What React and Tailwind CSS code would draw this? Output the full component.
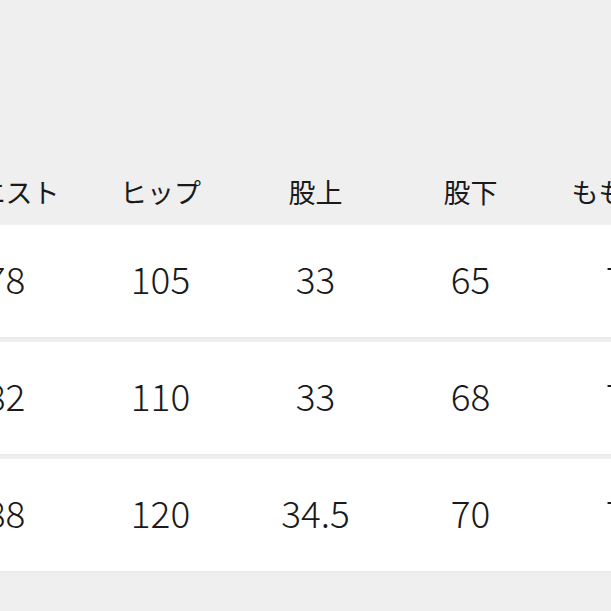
const headers = ["ウエスト", "ヒップ", "股上", "股下", "もも周り"]

const rows = [
  ["78", "105", "33", "65", "72"],
  ["82", "110", "33", "68", "74"],
  ["88", "120", "34.5", "70", "77"],
]

export default function App() {
  return (
    <div className="w-[611px] h-[611px] overflow-hidden bg-[#efefef] text-[#1a1a1a]" style={{ fontFamily: '"Noto Sans CJK JP", "Liberation Sans", sans-serif' }}>
      <div className="pt-[158px] -ml-[72px] w-[780px]">
        {/* header */}
        <div className="flex h-[67px] items-center">
          {headers.map((h, i) => (
            <div key={i} className="w-[155px] shrink-0 whitespace-nowrap text-center text-[27px] font-normal leading-none">
              {h}
            </div>
          ))}
        </div>

        {/* body rows */}
        <div className="flex flex-col gap-[5px]">
          {rows.map((r, i) => (
            <div key={i} className="flex h-[112px] items-center bg-white pb-[6px] shadow-[0_1px_2px_rgba(0,0,0,0.04)]">
              {r.map((v, j) => (
                <div key={j} className="w-[155px] shrink-0 text-center text-[37px] font-light leading-none">
                  {v}
                </div>
              ))}
            </div>
          ))}
        </div>
      </div>
    </div>
  )
}
